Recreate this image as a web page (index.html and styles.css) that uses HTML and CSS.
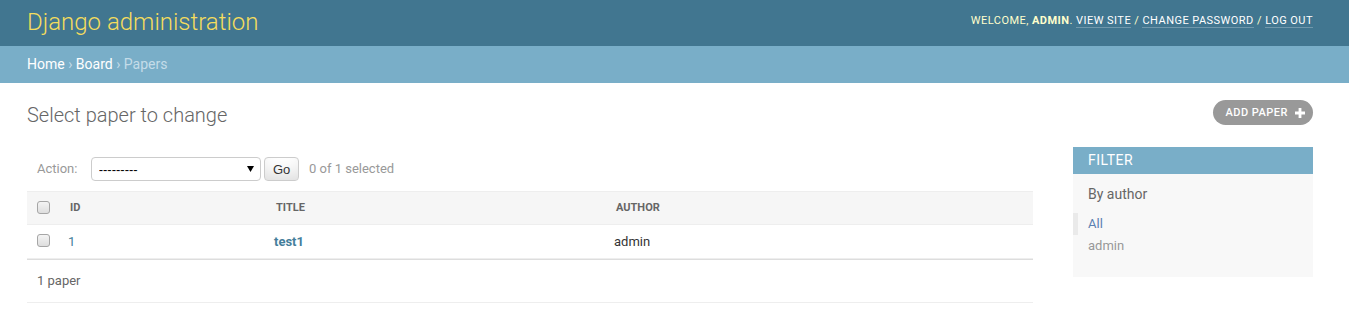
FILE: index.html
```html
<!DOCTYPE html>
<html lang="en">
<head>
<meta charset="utf-8">
<title>Select paper to change | Django site admin</title>
<link rel="stylesheet" href="styles.css">
</head>
<body>
<div class="header">
  <h1 class="branding"><a href="#">Django administration</a></h1>
  <div class="user-tools">Welcome, <strong>admin</strong>. <a href="#">View site</a> / <a href="#">Change password</a> / <a href="#">Log out</a></div>
</div>
<div class="breadcrumbs"><a href="#">Home</a> › <a href="#">Board</a> › Papers</div>
<div class="content">
  <div class="content-head">
    <h1 class="page-title">Select paper to change</h1>
    <a href="#" class="addlink">Add paper<svg class="plus" width="10" height="10" viewBox="0 0 10 10"><path d="M3.6 0h2.8v3.6H10v2.8H6.4V10H3.6V6.4H0V3.6h3.6z" fill="#fff"/></svg></a>
  </div>
  <div class="main">
    <div class="changelist">
      <div class="actions"><label>Action: <span class="select-wrap"><select class="action-select"><option>---------</option><option>Delete selected papers</option></select><svg class="arrow" width="7" height="6" viewBox="0 0 7 6"><path d="M0 0h7L3.5 6z" fill="#000"/></svg></span></label> <button class="go-button" type="button">Go</button> <span class="action-counter">0 of 1 selected</span></div>
      <table class="results">
        <thead>
          <tr>
            <th class="col-check"><input type="checkbox" class="cb"></th>
            <th class="col-id">ID</th>
            <th class="col-title">Title</th>
            <th class="col-author">Author</th>
          </tr>
        </thead>
        <tbody>
          <tr>
            <td class="col-check"><input type="checkbox" class="cb"></td>
            <td><a href="#" class="row-link">1</a></td>
            <th class="row-th"><a href="#" class="row-link">test1</a></th>
            <td>admin</td>
          </tr>
        </tbody>
      </table>
      <p class="paginator">1 paper</p>
    </div>
    <div class="filter">
      <h2 class="filter-title">Filter</h2>
      <h3 class="filter-sub">By author</h3>
      <ul class="filter-list">
        <li class="selected"><a href="#">All</a></li>
        <li><a href="#">admin</a></li>
      </ul>
    </div>
  </div>
</div>
</body>
</html>
```
FILE: styles.css
```css
html, body {
  margin: 0;
  padding: 0;
}
body {
  font-family: Roboto, "Liberation Sans", Arial, sans-serif;
  font-size: 14px;
  color: #333;
  background: #fff;
}
a {
  text-decoration: none;
}

.header {
  display: flex;
  justify-content: space-between;
  align-items: center;
  background: #417690;
  color: #ffc;
  padding: 7px 36px 9px 27px;
}
.branding {
  margin: 0;
  font-size: 24px;
  font-weight: 300;
  line-height: 30px;
}
.branding a {
  color: #f5dd5d;
}
.user-tools {
  font-size: 11px;
  letter-spacing: 0.46px;
  text-transform: uppercase;
  font-weight: 400;
  color: #ffc;
  margin-bottom: 3px;
}
.user-tools strong {
  font-weight: 700;
}
.user-tools a {
  color: #fff;
  border-bottom: 1px solid rgba(255, 255, 255, 0.25);
}

.breadcrumbs {
  background: #79aec8;
  color: #c4dce8;
  padding: 10px 36px 10px 27px;
  font-size: 14px;
  line-height: 17px;
}
.breadcrumbs a {
  color: #fff;
}

.content {
  padding: 20px 36px 20px 27px;
}
.content-head {
  display: flex;
  justify-content: space-between;
  align-items: flex-start;
}
.page-title {
  margin: 0 0 20px;
  font-size: 20px;
  font-weight: 300;
  line-height: 24px;
  color: #666;
}
.addlink {
  display: inline-flex;
  align-items: center;
  gap: 7px;
  margin-top: -3px;
  height: 25px;
  box-sizing: border-box;
  padding: 0 8px 0 12px;
  background: #999;
  color: #fff;
  border-radius: 15px;
  font-size: 11px;
  font-weight: 500;
  letter-spacing: 0.5px;
  text-transform: uppercase;
}
.plus {
  display: block;
}

.main {
  display: flex;
  align-items: flex-start;
}
.changelist {
  flex: 1;
  margin-right: 40px;
}

.actions {
  padding: 10px;
  line-height: 24px;
  color: #999;
  font-size: 13px;
}
.actions label {
  display: inline;
}
.select-wrap {
  position: relative;
  display: inline-block;
  vertical-align: top;
  margin-left: 10px;
}
.action-select {
  -webkit-appearance: none;
  appearance: none;
  display: block;
  width: 170px;
  height: 24px;
  box-sizing: border-box;
  border: 1px solid #ccc;
  border-radius: 4px;
  background: #fff;
  color: #000;
  font-family: "Liberation Sans", Arial, sans-serif;
  font-size: 13px;
  padding: 0 0 0 7px;
  margin: 0;
}
.arrow {
  position: absolute;
  right: 7px;
  top: 9px;
  pointer-events: none;
}
.go-button {
  vertical-align: top;
  height: 24px;
  box-sizing: border-box;
  padding: 3px 8px;
  margin: 0;
  border: 1px solid #ccc;
  border-radius: 4px;
  background: #fff;
  box-shadow: 0 -15px 20px -10px rgba(0, 0, 0, 0.15) inset;
  font-family: "Liberation Sans", Arial, sans-serif;
  font-size: 13px;
  line-height: 1;
  color: #333;
}
.action-counter {
  margin: 0 0.5em;
}

.results {
  width: 100%;
  border-collapse: collapse;
}
.results th,
.results td {
  text-align: left;
  vertical-align: top;
  font-size: 13px;
  line-height: 17px;
  padding: 8px;
  border-bottom: 1px solid #eee;
}
.results thead th {
  background: #f6f6f6;
  border-top: 1px solid #eee;
  color: #666;
  font-size: 11px;
  font-weight: 700;
  text-transform: uppercase;
  padding: 8px 10px;
  line-height: 16px;
}
.results .col-check {
  width: 13px;
  padding: 8px 10px;
  text-align: center;
}
.results .col-id {
  width: 186px;
}
.results .col-title {
  width: 320px;
}
.row-th {
  font-weight: 700;
}
.row-link {
  color: #447e9b;
}
.cb {
  -webkit-appearance: none;
  appearance: none;
  display: block;
  width: 13px;
  height: 13px;
  margin: 1px 0 0;
  box-sizing: border-box;
  border: 1px solid #a6a6a6;
  border-radius: 3px;
  background: linear-gradient(#f4f4f4, #dedede);
}

.paginator {
  margin: 0;
  padding: 10px;
  line-height: 22px;
  font-size: 13px;
  color: #666;
  border-top: 1px solid #ddd;
  border-bottom: 1px solid #eee;
}

.filter {
  width: 240px;
  flex: none;
  background: #f8f8f8;
}
.filter-title {
  margin: 0 0 12px;
  padding: 5px 15px;
  background: #79aec8;
  color: #fff;
  font-size: 14px;
  font-weight: 400;
  line-height: 17px;
  letter-spacing: 0.5px;
  text-transform: uppercase;
}
.filter-sub {
  margin: 0 0 10px;
  padding: 0 15px;
  font-size: 14px;
  font-weight: 400;
  line-height: 17px;
  color: #666;
}
.filter-list {
  list-style: none;
  margin: 5px 0;
  padding: 0 15px 15px;
}
.filter-list li {
  font-size: 13px;
  line-height: 20px;
  padding: 1px 0;
}
.filter-list li a {
  display: block;
  color: #999;
}
.filter-list li.selected {
  border-left: 5px solid #eaeaea;
  padding-left: 10px;
  margin-left: -15px;
}
.filter-list li.selected a {
  color: #5b80b2;
}
```
